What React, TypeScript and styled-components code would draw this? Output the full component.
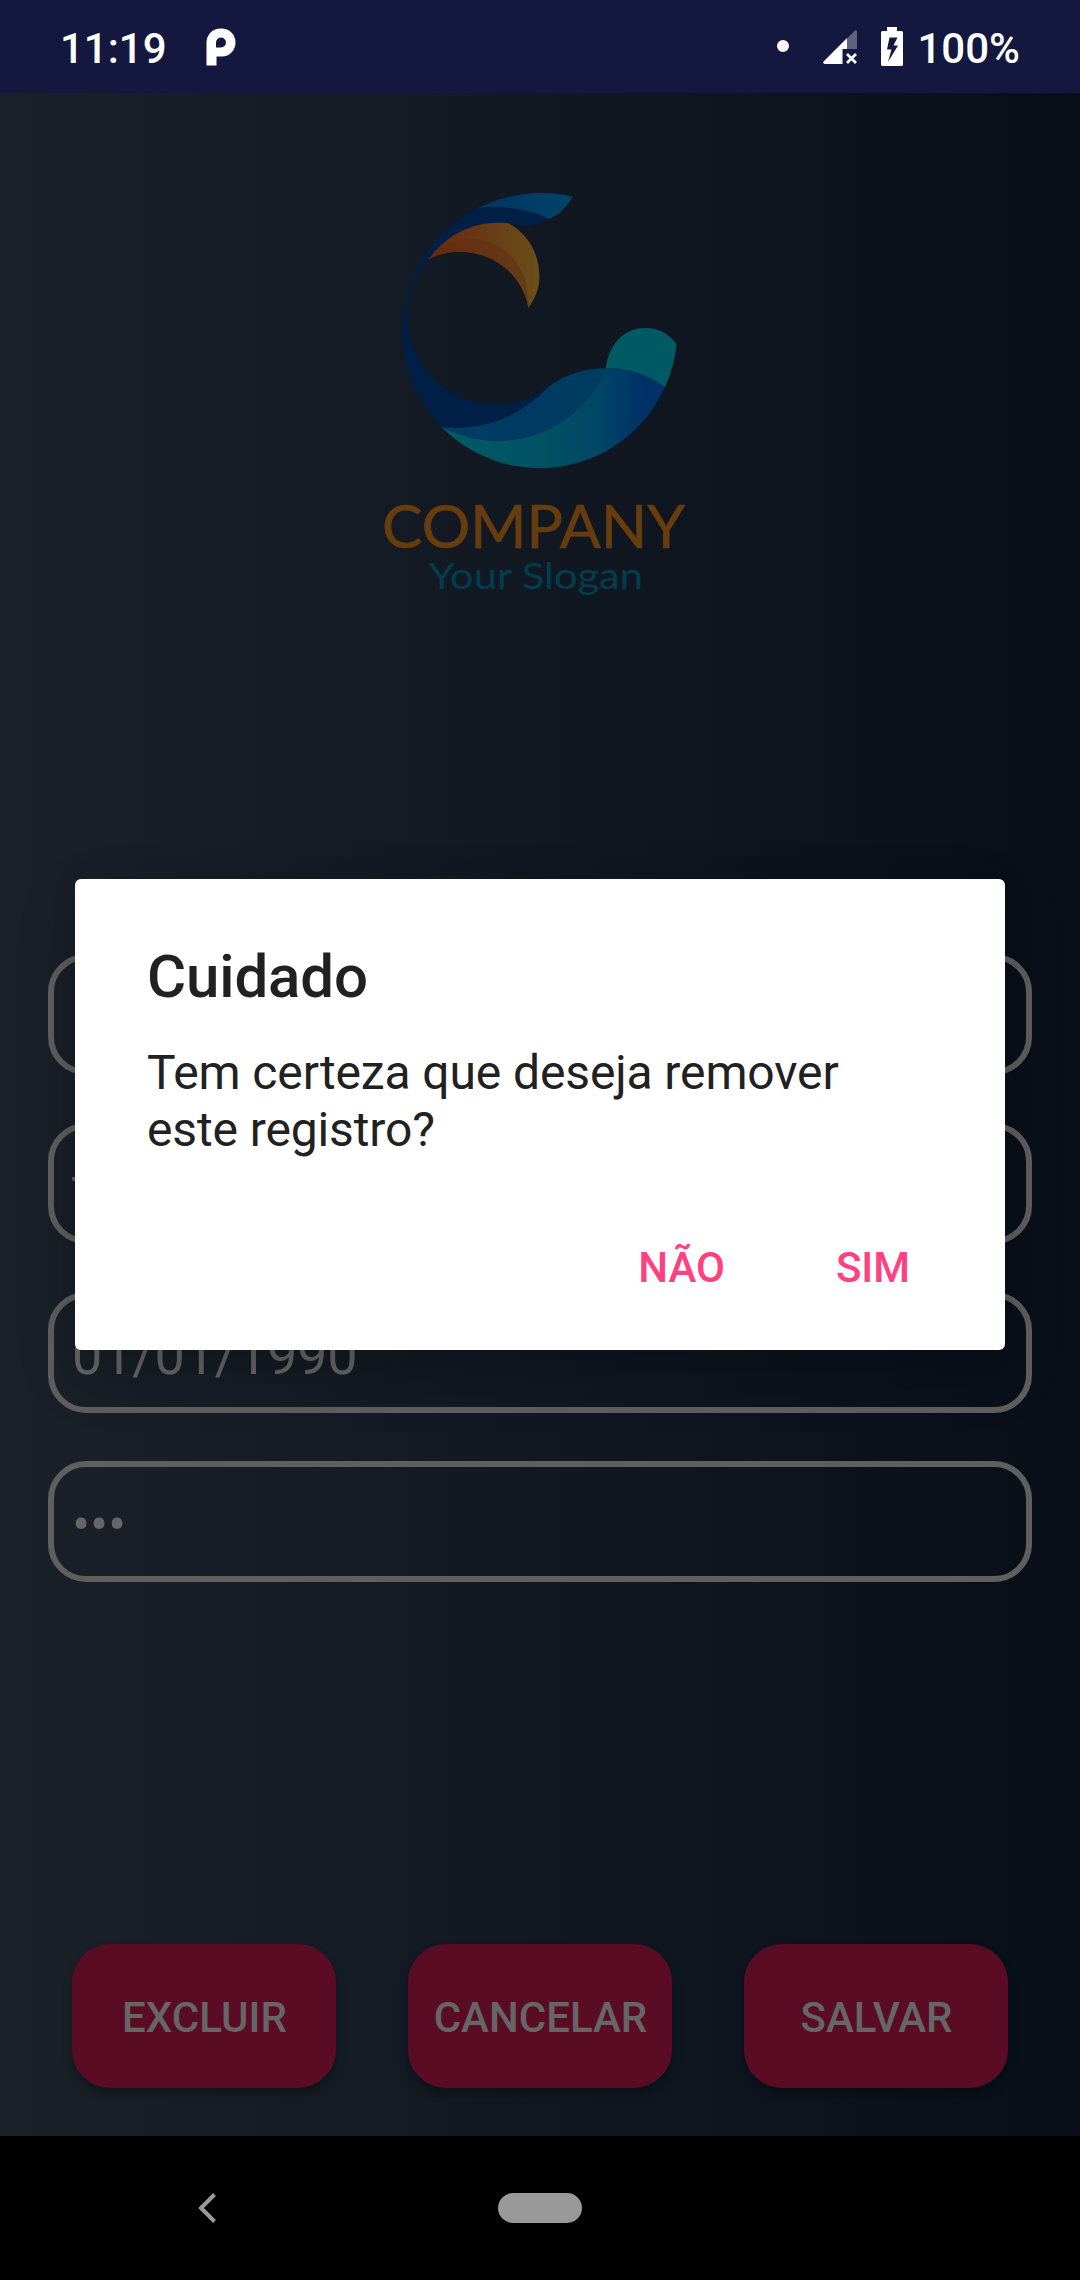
import React from "react";
import styled, { createGlobalStyle } from "styled-components";

const GlobalStyle = createGlobalStyle`
  * { box-sizing: border-box; }
  body { margin: 0; background: #000; font-family: Roboto, "Liberation Sans", sans-serif; }
`;

const Screen = styled.div`
  display: flex;
  flex-direction: column;
  width: 1080px;
  height: 2280px;
  overflow: hidden;
`;

const StatusBar = styled.header`
  display: flex;
  align-items: flex-start;
  justify-content: space-between;
  height: 93px;
  padding: 24px 60px 0 60px;
  background: #14183f;
  color: #fff;
`;

const StatusGroup = styled.div`
  display: flex;
  align-items: flex-start;
`;

const StatusText = styled.span`
  font-size: 42px;
  font-weight: 500;
  line-height: 49px;
  white-space: nowrap;
`;

const StatusIcon = styled.svg<{ $left: number; $right?: number; $top: number }>`
  display: block;
  flex: none;
  margin: ${(p) => p.$top}px ${(p) => p.$right ?? 0}px 0 ${(p) => p.$left}px;
`;

const Content = styled.main`
  position: relative;
  display: flex;
  flex-direction: column;
  flex: 1;
  padding: 77px 48px 48px;
  background: linear-gradient(90deg, #1a2129 0%, #111822 50%, #080f19 100%);
`;

const Logo = styled.svg`
  display: block;
  align-self: center;
  width: 360px;
  height: 450px;
`;

const Fields = styled.div`
  display: flex;
  flex-direction: column;
  gap: 48px;
  margin-top: 334px;
`;

const Field = styled.div`
  display: flex;
  align-items: center;
  height: 121px;
  padding: 5px 18px 0;
  border: 6px solid #5f5f5f;
  border-radius: 38px;
  color: #666;
  font-size: 54px;
  line-height: 63px;
  letter-spacing: -0.2px;
`;

const Actions = styled.div`
  display: flex;
  gap: 72px;
  margin-top: auto;
  padding: 0 24px;
`;

const ActionButton = styled.button`
  flex: 1;
  height: 144px;
  padding: 3px 0 0 1px;
  border: 0;
  border-radius: 38px;
  background: #5b0c25;
  box-shadow: 0 6px 10px rgba(0, 0, 0, 0.28);
  color: #666;
  font: 500 42px/49px Roboto, sans-serif;
`;

const Dialog = styled.section`
  position: absolute;
  top: 786px;
  left: 75px;
  display: flex;
  flex-direction: column;
  width: 930px;
  height: 471px;
  padding: 63px 72px 48px;
  border-radius: 6px;
  background: #fff;
  box-shadow: 0 24px 60px rgba(0, 0, 0, 0.2), 0 0 30px rgba(0, 0, 0, 0.06);
  color: #212121;
`;

const DialogTitle = styled.h1`
  margin: 0;
  font-size: 60px;
  font-weight: 500;
  line-height: 70px;
  letter-spacing: -0.15px;
`;

const DialogMessage = styled.p`
  margin: 32px 0 0;
  font-size: 48px;
  line-height: 57px;
  letter-spacing: -0.12px;
`;

const DialogButtons = styled.div`
  display: flex;
  justify-content: flex-end;
  gap: 111px;
  margin-top: auto;
  padding: 0 23px 10px 0;
`;

const DialogButton = styled.button`
  padding: 0;
  border: 0;
  background: none;
  color: #ff4081;
  font: 500 42px/49px Roboto, sans-serif;
`;

const NavBar = styled.nav`
  display: grid;
  grid-template-columns: 1fr 84px 1fr;
  align-items: center;
  height: 144px;
  background: #000;
`;

const BackIcon = styled.svg`
  display: block;
  margin-left: 198px;
`;

const HomePill = styled.div`
  height: 30px;
  border-radius: 15px;
  background: #999;
`;

const CompanyLogo = () => (
  <Logo viewBox="0 0 1080 1350">
    <defs>
      <linearGradient id="tail" x1="0" x2="1">
        <stop offset="0" stopColor="#003560" />
        <stop offset="1" stopColor="#00436b" />
      </linearGradient>
      <linearGradient id="crest" gradientUnits="userSpaceOnUse" x1="206" x2="538" y1="0" y2="0">
        <stop offset="0" stopColor="#692b10" />
        <stop offset="0.45" stopColor="#693716" />
        <stop offset="1" stopColor="#6b4f19" />
      </linearGradient>
      <linearGradient id="crestShade" gradientUnits="userSpaceOnUse" x1="206" x2="507" y1="0" y2="0">
        <stop offset="0" stopColor="#672810" />
        <stop offset="1" stopColor="#653c17" />
      </linearGradient>
      <linearGradient id="sea" gradientUnits="userSpaceOnUse" x1="245" x2="915" y1="0" y2="0">
        <stop offset="0" stopColor="#005b63" />
        <stop offset="0.5" stopColor="#005064" />
        <stop offset="0.7" stopColor="#004666" />
        <stop offset="0.9" stopColor="#003166" />
        <stop offset="1" stopColor="#003066" />
      </linearGradient>
      <linearGradient id="swell" gradientUnits="userSpaceOnUse" x1="245" x2="737" y1="0" y2="0">
        <stop offset="0" stopColor="#003f66" />
        <stop offset="0.5" stopColor="#003962" />
        <stop offset="1" stopColor="#003c62" />
      </linearGradient>
    </defs>
    <path
      fill="#001f47"
      d="M355 114A412 412 0 0 0 245 771C370 785 480 740 570 647A264 264 0 0 1 206 268C260 195 340 150 445 160C490 175 530 165 568 147C510 118 430 105 355 114Z"
    />
    <path fill="url(#tail)" d="M355 114A412 412 0 0 1 638 80C620 110 600 132 568 147C510 118 430 105 355 114Z" />
    <path
      fill="url(#crest)"
      d="M206 268C260 195 340 150 445 160C510 195 540 260 538 325C537 360 522 392 505 413C490 315 400 245 300 245C265 245 232 253 206 268Z"
    />
    <path
      fill="url(#crestShade)"
      d="M206 268C240 225 290 205 340 207C430 210 512 290 505 413C490 315 400 245 300 245C265 245 232 253 206 268Z"
    />
    <path
      fill="url(#sea)"
      d="M245 771A412 412 0 0 0 915 651C860 612 800 592 737 595C700 690 590 812 415 812C350 812 295 795 245 771Z"
    />
    <path
      fill="url(#swell)"
      d="M245 771C370 785 480 740 565 650C620 610 680 595 737 595C700 690 590 812 415 812C350 812 295 795 245 771Z"
    />
    <path fill="#005a63" d="M737 595C750 510 800 474 856 474C895 474 925 490 950 522A412 412 0 0 1 915 651C860 612 800 592 737 595Z" />
    <text
      x="66"
      y="1133"
      textLength="909"
      lengthAdjust="spacingAndGlyphs"
      fontFamily="Lato, sans-serif"
      fontSize="181"
      fill="#683d0e"
      stroke="#683d0e"
      strokeWidth="2"
      strokeLinejoin="round"
    >
      COMPANY
    </text>
    <text
      x="206"
      y="1257"
      textLength="643"
      lengthAdjust="spacingAndGlyphs"
      fontFamily="Lato, sans-serif"
      fontSize="111"
      fill="#003e4f"
    >
      Your Slogan
    </text>
  </Logo>
);

const FIELD_VALUES = ["", "t", "01/01/1990", "•••"];
const ACTIONS = ["EXCLUIR", "CANCELAR", "SALVAR"];

export default function App() {
  return (
    <Screen>
      <GlobalStyle />
      <StatusBar>
        <StatusGroup>
          <StatusText>11:19</StatusText>
          <StatusIcon $left={39} $top={4} width="30" height="38" viewBox="0 0 30 38">
            <path
              fill="#fff"
              fillRule="evenodd"
              d="M.5 37.5V15C.5 6.500 6.500 .5 15 .5S29.500 6.500 29.500 14.500 23.500 28.500 16 28.500H10.500V37.500ZM10 19V14.500A5 5 0 1 1 15 19.500H10Z"
            />
          </StatusIcon>
        </StatusGroup>
        <StatusGroup>
          <StatusIcon $left={0} $right={34} $top={16} width="12" height="12" viewBox="0 0 12 12">
            <circle cx="6" cy="6" r="6" fill="#fff" />
          </StatusIcon>
          <StatusIcon $left={0} $top={6} width="34" height="34" viewBox="0 0 34 34">
            <path fill="#fff" opacity="0.32" d="M24 8.500L32 .5Q34 -.5 34 2V19H24Z" />
            <path fill="#fff" d="M24 8V19H19.500V34H1.500Q-.8 33 .8 31.200Z" />
            <path stroke="#fff" strokeWidth="2.800" fill="none" d="M24 24L33 33M33 24L24 33" />
          </StatusIcon>
          <StatusIcon $left={24} $right={14} $top={3} width="22" height="39" viewBox="0 0 22 39">
            <path
              fill="#fff"
              fillRule="evenodd"
              d="M6 0H16V4H20.500Q22 4 22 5.500V37.500Q22 39 20.500 39H1.500Q0 39 0 37.500V5.500Q0 4 1.500 4H6ZM8.500 10.500L6 22.500H10.500L7 35L17 18.500H12.500L16.500 10.500Z"
            />
          </StatusIcon>
          <StatusText>100%</StatusText>
        </StatusGroup>
      </StatusBar>
      <Content>
        <CompanyLogo />
        <Fields>
          {FIELD_VALUES.map((value, i) => (
            <Field key={i}>{value}</Field>
          ))}
        </Fields>
        <Actions>
          {ACTIONS.map((label) => (
            <ActionButton key={label}>{label}</ActionButton>
          ))}
        </Actions>
        <Dialog role="alertdialog">
          <DialogTitle>Cuidado</DialogTitle>
          <DialogMessage>
            Tem certeza que deseja remover
            <br />
            este registro?
          </DialogMessage>
          <DialogButtons>
            <DialogButton>NÃO</DialogButton>
            <DialogButton>SIM</DialogButton>
          </DialogButtons>
        </Dialog>
      </Content>
      <NavBar>
        <BackIcon width="18" height="30" viewBox="0 0 18 30">
          <path d="M16.500 1.500L3 15L16.500 28.500" fill="none" stroke="#999" strokeWidth="4" />
        </BackIcon>
        <HomePill />
      </NavBar>
    </Screen>
  );
}
